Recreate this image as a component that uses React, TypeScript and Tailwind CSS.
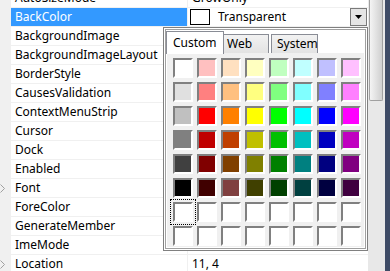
import React from "react";

const FONT = { fontFamily: '"Segoe UI", "Noto Sans", "Open Sans", sans-serif' };

const rows: { name: string; value?: string; expand?: boolean }[] = [
  { name: "AutoSizeMode", value: "GrowOnly" },
  { name: "BackColor" },
  { name: "BackgroundImage", value: "(none)" },
  { name: "BackgroundImageLayout", value: "Tile" },
  { name: "BorderStyle", value: "None" },
  { name: "CausesValidation", value: "True" },
  { name: "ContextMenuStrip", value: "(none)" },
  { name: "Cursor", value: "Default" },
  { name: "Dock", value: "None" },
  { name: "Enabled", value: "True" },
  { name: "Font", value: "Segoe UI, 9pt", expand: true },
  { name: "ForeColor", value: "ControlText" },
  { name: "GenerateMember", value: "True" },
  { name: "ImeMode", value: "NoControl" },
  { name: "Location", value: "11, 4", expand: true },
];

const colors: string[][] = [
  ["#FFFFFF", "#FFC0C0", "#FFE0C0", "#FFFFC0", "#C0FFC0", "#C0FFFF", "#C0C0FF", "#FFC0FF"],
  ["#E0E0E0", "#FF8080", "#FFC080", "#FFFF80", "#80FF80", "#80FFFF", "#8080FF", "#FF80FF"],
  ["#C0C0C0", "#FF0000", "#FF8000", "#FFFF00", "#00FF00", "#00FFFF", "#0000FF", "#FF00FF"],
  ["#808080", "#C00000", "#C04000", "#C0C000", "#00C000", "#00C0C0", "#0000C0", "#C000C0"],
  ["#404040", "#800000", "#804000", "#808000", "#008000", "#008080", "#000080", "#800080"],
  ["#000000", "#400000", "#804040", "#404000", "#004000", "#004040", "#000040", "#400040"],
  ["#FFFFFF", "#FFFFFF", "#FFFFFF", "#FFFFFF", "#FFFFFF", "#FFFFFF", "#FFFFFF", "#FFFFFF"],
  ["#FFFFFF", "#FFFFFF", "#FFFFFF", "#FFFFFF", "#FFFFFF", "#FFFFFF", "#FFFFFF", "#FFFFFF"],
];

function Chevron() {
  return (
    <svg width="6" height="9" viewBox="0 0 6 9" className="absolute left-0 top-[5px]">
      <polyline points="0.5,0.5 4.5,4.5 0.5,8.5" fill="none" stroke="#a0a0a0" strokeWidth="1" />
    </svg>
  );
}

function Row({ r }: { r: (typeof rows)[number] }) {
  const selected = r.name === "BackColor";
  return (
    <div className="flex h-[19px] shrink-0">
      <div className="relative w-[11px] shrink-0 bg-[#f0f0f0]">{r.expand && <Chevron />}</div>
      <div
        className={`w-[177px] shrink-0 border-b border-r border-[#f0f0f0] pl-[4px] text-[12px] leading-[18px] ${
          selected ? "bg-[#3399ff] text-white" : "bg-white text-black"
        }`}
      >
        {r.name}
      </div>
      <div className="flex flex-1 items-center border-b border-[#f0f0f0] bg-white text-[12px] leading-[18px] text-black">
        {selected ? (
          <>
            <div className="ml-[2px] h-[16px] w-[20px] border border-black bg-white" />
            <span className="ml-[8px]">Transparent</span>
            <div className="ml-auto mr-[1px] flex h-[18px] w-[17px] items-center justify-center border border-[#7a7a7a] bg-[#e5e5e5]">
              <svg width="7" height="4" viewBox="0 0 7 4">
                <polygon points="0,0 7,0 3.5,4" fill="#000" />
              </svg>
            </div>
          </>
        ) : (
          <span className="pl-[4px]">{r.value}</span>
        )}
      </div>
    </div>
  );
}

function Swatch({ c, focus }: { c: string; focus?: boolean }) {
  return (
    <div className="relative h-[20px] w-[20px]">
      {focus && <div className="absolute -left-[3px] -top-[3px] h-[26px] w-[26px] border border-dotted border-black" />}
      <div
        className="h-[20px] w-[20px] border-2 border-b-[#ffffff] border-l-[#808080] border-r-[#ffffff] border-t-[#808080]"
        style={{ backgroundColor: c }}
      />
    </div>
  );
}

function ColorPanel() {
  return (
    <div className="absolute left-[163px] top-[27px] h-[224px] w-[205px] border border-[#808080] bg-white p-px">
      <div className="flex h-full w-full flex-col border border-[#a0a0a0] bg-white">
        <div className="flex h-[23px] items-end pl-0">
          <div className="relative z-10 -mb-px flex h-[23px] w-[58px] items-start border border-b-0 border-[#898c95] bg-white pl-[6px] pt-[3px] text-[12px] leading-[16px] text-black">
            Custom
          </div>
          <div className="flex h-[19px] w-[45px] items-start border border-b-0 border-l-0 border-[#898c95] bg-gradient-to-b from-[#f2f2f2] to-[#e3e3e3] pl-[3px] pt-[1px] text-[12px] leading-[16px] text-black">
            Web
          </div>
          <div className="ml-[2px] flex h-[19px] w-[47px] items-start border border-b-0 border-[#898c95] bg-gradient-to-b from-[#f2f2f2] to-[#e3e3e3] pl-[5px] pt-[1px] text-[12px] leading-[16px] text-black">
            System
          </div>
        </div>
        <div className="mx-[1px] mb-[1px] flex-1 bg-[#f0f0f0] pl-[6px] pt-[5px]">
          <div className="grid grid-cols-[repeat(8,20px)] gap-[4px]">
            {colors.map((row, i) =>
              row.map((c, j) => <Swatch key={`${i}-${j}`} c={c} focus={i === 6 && j === 0} />)
            )}
          </div>
        </div>
      </div>
    </div>
  );
}

export default function App() {
  return (
    <div className="flex h-[271px] w-[390px] overflow-hidden bg-white" style={FONT}>
      <div className="relative flex w-[368px] flex-col overflow-hidden">
        <div className="mt-[-11px] flex flex-col">
          {rows.map((r) => (
            <Row key={r.name} r={r} />
          ))}
        </div>
        <ColorPanel />
      </div>
      <div className="flex w-[17px] flex-col bg-[#e8e8e8] pl-[1px] pr-[2px]">
        <div className="h-[101px] w-[14px] rounded-b-[2px] border border-t-0 border-[#a0a0a0] bg-gradient-to-r from-[#f4f4f4] via-[#e2e2e2] to-[#cfcfcf]" />
      </div>
      <div className="w-[5px] bg-[#3e4b66]" />
    </div>
  );
}
